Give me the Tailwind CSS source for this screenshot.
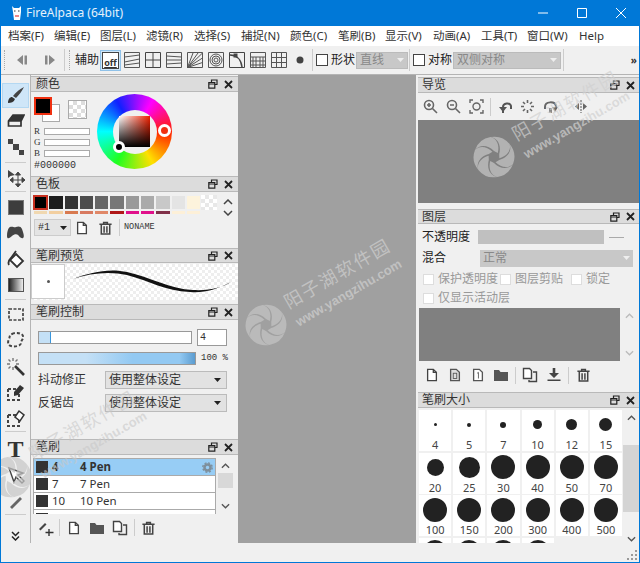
<!DOCTYPE html>
<html lang="en">
<head>
    <meta charset="UTF-8">
    <meta name="viewport" content="width=device-width, initial-scale=1.0">
    <title>FireAlpaca (64bit)</title>
    <script src="https://cdn.jsdelivr.net/npm/@tailwindcss/browser@4"></script>
</head>
<body class="font-['Noto_Sans','Noto_Sans_CJK_SC',sans-serif] text-[12px] text-[#333] bg-[#f0f0f0]">
<!-- shared icons -->
<svg class="hidden">
    <symbol id="i-new" viewBox="0 0 16 16"><path d="M3 1.500h6.500l3.500 3.500v9.500H3z M9.500 1.500V5H13" fill="#fff" stroke="#444" stroke-width="1.500"/></symbol>
    <symbol id="i-trash" viewBox="0 0 16 16"><path d="M1.500 4h13 M6 4V2h4v2 M3.500 4v10.500h9V4 M6.500 6v7 M9.500 6v7" fill="none" stroke="#444" stroke-width="1.600"/></symbol>
    <symbol id="i-folder" viewBox="0 0 16 16"><path d="M1 3h5l1.500 2H15v9H1z" fill="#555"/></symbol>
    <symbol id="i-copy" viewBox="0 0 16 16"><path d="M1.500 1.500h6l2 2v8h-8z" fill="#fff" stroke="#444" stroke-width="1.400"/><path d="M11 5h3.500v9.500H7V13" fill="none" stroke="#444" stroke-width="1.400"/></symbol>
    <symbol id="i-up" viewBox="0 0 10 6"><path d="M1 5l4-4 4 4" fill="none" stroke="currentColor" stroke-width="1.500"/></symbol>
    <symbol id="i-down" viewBox="0 0 10 6"><path d="M1 1l4 4 4-4" fill="none" stroke="currentColor" stroke-width="1.500"/></symbol>
    <symbol id="i-swirl" viewBox="-22 -22 44 44">
        <path id="petal" d="M0-6C-6-12-14-13-19-7A20 20 0 0 1-3.400-20C3-18.500 5.800-11.500 3.800-4Z"/>
        <use href="#petal" transform="rotate(60)"/><use href="#petal" transform="rotate(120)"/><use href="#petal" transform="rotate(180)"/><use href="#petal" transform="rotate(240)"/><use href="#petal" transform="rotate(300)"/>
    </symbol>
</svg>

<div class="relative w-[640px] h-[563px] overflow-hidden flex flex-col border-x border-b border-[#0078d7]">
    <!-- Title bar -->
    <div class="h-[26px] -mx-px bg-[#0078d7] text-white flex items-center shrink-0">
        <svg class="w-4 h-4 ml-[9px]" viewBox="0 0 16 16"><path d="M3 1l2 2h5l2-2v6l-1 8H5L4 7z" fill="#fff"/><path d="M5 6h1.500M9 6h1.500" stroke="#333"/><path d="M6 10h4v2H6z" fill="#e88"/></svg>
        <span class="ml-px text-[12px] text-white/90">FireAlpaca (64bit)</span>
        <div class="ml-auto flex items-center text-white">
            <svg class="w-[39px] h-[26px]" viewBox="0 0 39 26"><path d="M15 13h10" stroke="#fff"/></svg>
            <svg class="w-[39px] h-[26px]" viewBox="0 0 39 26"><path d="M15.500 8.500h9v9h-9z" fill="none" stroke="#fff"/></svg>
            <svg class="w-[39px] h-[26px]" viewBox="0 0 39 26"><path d="M15 8l10 10M25 8L15 18" stroke="#fff"/></svg>
        </div>
    </div>

    <!-- Menu -->
    <div class="h-[20px] -mx-px bg-white flex items-center pl-[8px] text-[11.500px] shrink-0">
        <span class="w-[46px]">档案(F)</span><span class="w-[46px]">编辑(E)</span><span class="w-[46px]">图层(L)</span><span class="w-[48px]">滤镜(R)</span><span class="w-[47px]">选择(S)</span><span class="w-[49px]">捕捉(N)</span><span class="w-[48px]">颜色(C)</span><span class="w-[47px]">笔刷(B)</span><span class="w-[48px]">显示(V)</span><span class="w-[48px]">动画(A)</span><span class="w-[46px]">工具(T)</span><span class="w-[52px]">窗口(W)</span><span>Help</span>
    </div>

    <!-- Toolbar -->
    <div class="h-[29px] flex items-center bg-[#f0f0f0] border-b border-[#b4b4b4] shrink-0 relative">
        <div class="w-[3px] h-[20px] ml-[3px] border-l border-dotted border-[#aaa]"></div>
        <svg class="w-[12px] h-[12px] ml-[9px]" viewBox="0 0 12 12"><path d="M7 1v10L1 6z M8.500 1.500h2.500v9H8.500z" fill="#888"/></svg>
        <svg class="w-[12px] h-[12px] ml-[16px]" viewBox="0 0 12 12"><path d="M1 1.500h2.500v9H1z M5 1v10l6-5z" fill="#888"/></svg>
        <div class="w-px h-[22px] bg-[#ccc] ml-[8px]"></div>
        <div class="w-[3px] h-[20px] ml-[4px] border-l border-dotted border-[#aaa]"></div>
        <span class="ml-[3px] w-[25px] text-[#222]">辅助</span>
        <div class="w-[21px] h-[21px] bg-[#cfe6f8] border border-[#8fc1e8] flex items-center justify-center">
            <div class="w-[17px] h-[17px] bg-white border border-[#444] flex items-end justify-center text-[9px] leading-[10px] font-bold underline">off</div>
        </div>
        <div class="flex items-center gap-[5px] ml-[3px]">
            <svg class="w-[16px] h-[16px]" viewBox="0 0 16 16" fill="none" stroke="#555"><path d="M.5.500h15v15H.5z M.5 5l15-2 M.5 10l15-3 M.5 13l15-2"/></svg>
            <svg class="w-[16px] h-[16px]" viewBox="0 0 16 16" fill="none" stroke="#444"><path d="M.5.500h15v15H.5z M8 .5v15 M.5 8h15"/></svg>
            <svg class="w-[16px] h-[16px]" viewBox="0 0 16 16" fill="none" stroke="#555"><path d="M.5.500h15v15H.5z M.5 4l15 1 M.5 8h15 M.5 12l15-1"/></svg>
            <svg class="w-[16px] h-[16px]" viewBox="0 0 16 16" fill="none" stroke="#555"><path d="M.5.500h15v15H.5z M.5 15.500L15.500 1 M.5 15.500L15.500 6 M.5 15.500l15-5 M.5 15.500L6 1 M.5 15.500L11 1"/></svg>
            <svg class="w-[16px] h-[16px]" viewBox="0 0 16 16" fill="none" stroke="#555"><path d="M.5.500h15v15H.5z"/><circle cx="8" cy="8" r="6"/><circle cx="8" cy="8" r="4"/><circle cx="8" cy="8" r="2"/></svg>
            <svg class="w-[16px] h-[16px]" viewBox="0 0 16 16" fill="none" stroke="#444"><path d="M.5.500h15v15H.5z"/><path d="M1 3c6 0 11 4 12 12" stroke-width="1.500"/><rect x="5" y="2" width="3" height="3" fill="#444"/></svg>
            <svg class="w-[16px] h-[16px]" viewBox="0 0 16 16" fill="none" stroke="#555"><path d="M.5.500h15v15H.5z M.5 5h15 M.5 9h15 M.5 13h15 M3 5v10 M6 5v10 M10 5v10 M13 5v10"/></svg>
            <svg class="w-[16px] h-[16px]" viewBox="0 0 16 16" fill="none" stroke="#555"><path d="M.5.500h15v15H.5z M.5 5.500h15 M.5 10.500h15 M5.500.5v15 M10.500.5v15"/></svg>
            <svg class="w-[16px] h-[16px]" viewBox="0 0 16 16"><circle cx="8" cy="8" r="3.500" fill="#444"/></svg>
        </div>
        <div class="w-px h-[22px] bg-[#ccc] ml-[4px]"></div>
        <div class="w-[12px] h-[12px] border border-[#444] bg-white ml-[3px]"></div>
        <span class="ml-[3px] w-[25px] text-[#222]">形状</span>
        <div class="w-[52px] h-[17px] bg-[#c8c8c8] border border-[#bbb] flex items-center justify-between px-[3px] text-[#888]">直线<svg class="w-[7px] h-[4px]" viewBox="0 0 7 4"><path d="M0 0h7L3.500 4z" fill="#eee"/></svg></div>
        <div class="w-px h-[22px] bg-[#ccc] ml-[1px]"></div>
        <div class="w-[12px] h-[12px] border border-[#444] bg-white ml-[3px]"></div>
        <span class="ml-[3px] w-[25px] text-[#222]">对称</span>
        <div class="w-[108px] h-[17px] bg-[#c8c8c8] border border-[#bbb] flex items-center justify-between px-[3px] text-[#888]">双侧对称<svg class="w-[7px] h-[4px]" viewBox="0 0 7 4"><path d="M0 0h7L3.500 4z" fill="#eee"/></svg></div>
        <div class="w-px h-[22px] bg-[#ccc] ml-[2px]"></div>
        <span class="ml-auto mr-[2px] text-[10px] font-bold leading-none">»</span>
    </div>

    <!-- Workspace -->
    <div class="flex h-[468px] shrink-0">
        <!-- Tools -->
        <div class="w-[30px] shrink-0 flex flex-col items-center border-r border-[#b4b4b4]">
            <div class="h-[8px] w-full"></div>
            <button class="w-[27px] h-[25px] bg-[#cfe6f8] border border-[#b4d8f2] flex items-center justify-center">
                <svg class="w-[20px] h-[20px]" viewBox="0 0 20 20"><path d="M18 1C14 3 10 6 7 10l3 2c3-3 6-7 8-11z" fill="#444"/><path d="M6 11c-2 0-4 2-4 6 3 0 6-1 7-4z" fill="#333"/></svg>
            </button>
            <div class="h-[26px] flex items-center"><svg class="w-[18px] h-[18px]" viewBox="0 0 18 18"><path d="M1.500 9L6 3h11l-3 6v5H1.500z M1.500 9H14" fill="none" stroke="#333" stroke-width="1.700"/><path d="M6 3h11l-3 6H1.500z" fill="#333"/></svg></div>
            <div class="h-[26px] flex items-center"><svg class="w-[18px] h-[18px]" viewBox="0 0 18 18" fill="#444"><rect x="1" y="1" width="5" height="5"/><rect x="6" y="6" width="6" height="6"/><rect x="12" y="12" width="5" height="5"/></svg></div>
            <div class="w-[21px] h-px bg-[#ccc] mt-[2px]"></div>
            <div class="h-[26px] mt-[2px] flex items-center"><svg class="w-[18px] h-[18px]" viewBox="0 0 18 18"><path d="M1 1v8l2.500-2L8 6z" fill="#444"/><path d="M11 5v12M5 11h12M11 3l-2.500 3h5zM11 18l-2.500-3h5zM3 11l3-2.500v5zM18 11l-3-2.500v5z" stroke="#444" fill="#444"/></svg></div>
            <div class="w-[21px] h-px bg-[#ccc]"></div>
            <div class="h-[26px] mt-[2px] flex items-center"><div class="w-[16px] h-[15px] bg-[#3d3d3d] border border-[#777]"></div></div>
            <div class="h-[26px] flex items-center"><svg class="w-[19px] h-[16px]" viewBox="0 0 19 16"><path d="M4 2c3-1 4 1 6 0s5-1 6 2 3 8 1 9-4-2-5-3-4-1-6 1-5 4-5 0 1-8 3-9z" fill="#444"/></svg></div>
            <div class="h-[26px] flex items-center"><svg class="w-[19px] h-[19px]" viewBox="0 0 19 19"><path d="M10 4l7 7-6 6-7-7z" fill="#fff" stroke="#333" stroke-width="1.800"/><path d="M10 1L5 8c-2 2-3 5-2 7" fill="none" stroke="#333" stroke-width="1.800"/></svg></div>
            <div class="h-[26px] flex items-center"><div class="w-[16px] h-[14px] border border-[#555] bg-[linear-gradient(to_right,#222,#eee)]"></div></div>
            <div class="w-[21px] h-px bg-[#ccc] mt-[1px]"></div>
            <div class="h-[26px] mt-[1px] flex items-center"><svg class="w-[16px] h-[13px]" viewBox="0 0 16 13"><path d="M1 1h14v11H1z" fill="none" stroke="#444" stroke-width="1.700" stroke-dasharray="3 1.500"/></svg></div>
            <div class="h-[26px] flex items-center"><svg class="w-[17px] h-[16px]" viewBox="0 0 17 16"><path d="M5 2c4-2 10-1 11 2s-2 4-2 7-6 4-10 3-3-5-2-7 0-4 3-5z" fill="none" stroke="#444" stroke-width="2" stroke-dasharray="3 2"/></svg></div>
            <div class="h-[26px] flex items-center"><svg class="w-[19px] h-[19px]" viewBox="0 0 19 19"><path d="M9 9l9 9" stroke="#333" stroke-width="2.600"/><path d="M7 1v3M7 10v3M1 7h3M10 7h3M2.500 2.500l2 2M11.500 2.500l-2 2M2.500 11.500l2-2" stroke="#777" stroke-width="1.400"/></svg></div>
            <div class="h-[26px] flex items-center"><svg class="w-[19px] h-[19px]" viewBox="0 0 19 19"><path d="M2 6h9M2 6v11h11v-7" fill="none" stroke="#444" stroke-width="2" stroke-dasharray="3 2"/><path d="M8 9l6-7 4 3-6 7-4 1z" fill="#333"/></svg></div>
            <div class="h-[26px] flex items-center"><svg class="w-[19px] h-[19px]" viewBox="0 0 19 19"><path d="M2 6h9M2 6v11h11v-7" fill="none" stroke="#444" stroke-width="2" stroke-dasharray="3 2"/><path d="M9 8l4-6 5 4-4 6z" fill="#fff" stroke="#333" stroke-width="1.500"/></svg></div>
            <div class="w-[21px] h-px bg-[#ccc]"></div>
            <div class="h-[26px] mt-[4px] flex items-center text-[24px] leading-none font-bold font-['Liberation_Serif',serif] text-[#333]">T</div>
            <div class="h-[26px] flex items-center"><svg class="w-[18px] h-[18px]" viewBox="0 0 18 18"><path d="M2 2l5 14 2-5 6 6 2-2-6-6 5-2z" fill="#fff" stroke="#444" stroke-width="1.400"/></svg></div>
            <div class="h-[26px] flex items-center"><svg class="w-[18px] h-[18px]" viewBox="0 0 18 18"><path d="M3 15L13 5l2 2L5 17z" fill="#666"/></svg></div>
            <div class="w-[21px] h-px bg-[#ccc]"></div>
            <svg class="w-[9px] h-[10px] mt-[16px]" viewBox="0 0 9 10" fill="none" stroke="#222" stroke-width="1.500"><path d="M1 1l3.500 3.500L8 1M1 5.500L4.500 9 8 5.500"/></svg>
        </div>

        <!-- Left docks -->
        <div class="w-[207px] shrink-0 flex flex-col">
            <!-- Color -->
            <div class="h-[16px] mt-[1px] flex items-center justify-between bg-[#dcdcdc] border-y border-[#b9b9b9] px-[5px] shrink-0"><span>颜色</span><span data-panel-icons></span></div>
            <div class="h-[84px] relative shrink-0">
                <div class="absolute left-[3px] top-[5px] w-[18px] h-[18px] bg-black border-2 border-[#f03010] z-10"></div>
                <div class="absolute left-[11px] top-[12px] w-[18px] h-[18px] bg-white border border-[#aaa]"></div>
                <div class="absolute left-[37px] top-[8px] w-[19px] h-[19px] border border-[#aaa] bg-[repeating-conic-gradient(#ddd_0_25%,#fff_0_50%)] bg-size-[8px_8px]"></div>
                <div class="absolute left-[3px] top-[36px] flex flex-col gap-[4px] text-[9px] leading-[7px] font-['Liberation_Serif',serif]">
                    <div class="flex items-center h-[7px]"><span class="w-[10px]">R</span><div class="w-[46px] h-[7px] bg-white border border-[#aaa]"></div></div>
                    <div class="flex items-center h-[7px]"><span class="w-[10px]">G</span><div class="w-[46px] h-[7px] bg-white border border-[#aaa]"></div></div>
                    <div class="flex items-center h-[7px]"><span class="w-[10px]">B</span><div class="w-[46px] h-[7px] bg-white border border-[#aaa]"></div></div>
                </div>
                <div class="absolute left-[3px] top-[68px] text-[10px] leading-[11px] font-['Liberation_Mono',monospace]">#000000</div>
                <!-- wheel -->
                <div class="absolute left-[66px] top-[2px] w-[75px] h-[75px] rounded-full bg-[conic-gradient(from_90deg,#ff2000,#ffe000,#20ff20,#00ffff,#1020ff,#ff00ff,#ff2000)] flex items-center justify-center">
                    <div class="w-[44px] h-[44px] rounded-full bg-[#f0f0f0] flex items-center justify-center">
                        <div class="w-[31px] h-[31px] bg-[linear-gradient(to_bottom,transparent,#000),linear-gradient(to_right,#fff,#f02000)]"></div>
                    </div>
                    <div class="absolute right-[1px] top-[30px] w-[13px] h-[13px] rounded-full border-[3px] border-white bg-[#f03010]"></div>
                    <div class="absolute left-[16px] bottom-[16px] w-[12px] h-[12px] rounded-full border-[3px] border-white bg-black"></div>
                </div>
            </div>

            <!-- Palette -->
            <div class="h-[16px] flex items-center justify-between bg-[#dcdcdc] border-y border-[#b9b9b9] px-[5px] shrink-0"><span>色板</span><span data-panel-icons></span></div>
            <div class="h-[55px] shrink-0 pl-[2px] pt-[3px]">
                <div class="flex items-start">
                    <div>
                        <div id="swatches" class="flex"></div>
                        <div id="strips" class="flex mt-[1px]"></div>
                    </div>
                    <div class="ml-[6px] flex flex-col gap-[5px] mt-[4px] text-[#444]">
                        <svg class="w-[10px] h-[6px]"><use href="#i-up"/></svg>
                        <svg class="w-[10px] h-[6px]"><use href="#i-down"/></svg>
                    </div>
                </div>
                <div class="flex items-center mt-[3px] ml-[1px]">
                    <div class="w-[37px] h-[17px] bg-[#e4e4e4] border border-[#ccc] flex items-center justify-between px-[3px] font-['Liberation_Mono',monospace] text-[10px]">#1<svg class="w-[7px] h-[4px]" viewBox="0 0 7 4"><path d="M0 0h7L3.500 4z" fill="#222"/></svg></div>
                    <svg class="w-[14px] h-[16px] ml-[4px]"><use href="#i-new"/></svg>
                    <svg class="w-[15px] h-[16px] ml-[9px]"><use href="#i-trash"/></svg>
                    <div class="w-px h-[17px] bg-[#ccc] ml-[6px]"></div>
                    <span class="ml-[4px] font-['Liberation_Mono',monospace] text-[8.500px]">NONAME</span>
                </div>
            </div>

            <!-- Preview -->
            <div class="h-[15px] mt-[1px] flex items-center justify-between bg-[#dcdcdc] border-y border-[#b9b9b9] px-[5px] shrink-0"><span>笔刷预览</span><span data-panel-icons></span></div>
            <div class="h-[36px] mt-[1px] flex shrink-0 bg-[repeating-conic-gradient(#eeeeee_0_25%,#fff_0_50%)] bg-size-[6px_6px]">
                <div class="w-[34px] h-[35px] bg-white border border-[#ccc] flex items-center justify-center"><div class="w-[3px] h-[3px] rounded-full bg-[#555]"></div></div>
                <svg class="w-[173px] h-[36px]" viewBox="0 0 173 36"><path d="M8 15C25 8 45 4 62 8C85 13 105 25 128 26C145 27 158 23 166 18C150 26 140 29 125 28C100 27 85 17 62 11C45 7 25 9 8 15Z" fill="#111"/></svg>
            </div>

            <!-- Brush control -->
            <div class="h-[16px] mt-[4px] flex items-center justify-between bg-[#dcdcdc] border-y border-[#b9b9b9] px-[5px] shrink-0"><span>笔刷控制</span><span data-panel-icons></span></div>
            <div class="h-[119px] shrink-0 pl-[7px] pr-[10px] pt-[9px] flex flex-col">
                <div class="flex items-center gap-[5px]">
                    <div class="w-[154px] h-[13px] bg-white border border-[#999]"><div class="w-[12px] h-full bg-[#c4e0f6] border-r border-[#3a96dc]"></div></div>
                    <div class="w-[30px] h-[17px] bg-white border border-[#999] px-[2px] text-[10px] leading-[15px] font-['Liberation_Mono',monospace]">4</div>
                </div>
                <div class="flex items-center mt-[6px]">
                    <div class="w-[158px] h-[13px] border border-[#999] bg-[linear-gradient(to_right,#c4e0f6,#c4e0f6_30%,#93c9f2_60%,#93c9f2_90%,#5b9cd0)]"></div>
                    <span class="ml-[5px] text-[9px] font-['Liberation_Mono',monospace] whitespace-nowrap">100 %</span>
                </div>
                <div class="flex items-center mt-[5px]">
                    <span class="w-[67px]">抖动修正</span>
                    <div class="w-[122px] h-[18px] bg-[#e2e2e2] border border-[#bbb] flex items-center justify-between px-[3px]">使用整体设定<svg class="w-[7px] h-[4px] mr-[2px]" viewBox="0 0 7 4"><path d="M0 0h7L3.500 4z" fill="#222"/></svg></div>
                </div>
                <div class="flex items-center mt-[5px]">
                    <span class="w-[67px]">反锯齿</span>
                    <div class="w-[122px] h-[18px] bg-[#e2e2e2] border border-[#bbb] flex items-center justify-between px-[3px]">使用整体设定<svg class="w-[7px] h-[4px] mr-[2px]" viewBox="0 0 7 4"><path d="M0 0h7L3.500 4z" fill="#222"/></svg></div>
                </div>
            </div>

            <!-- Brushes -->
            <div class="h-[16px] flex items-center justify-between bg-[#dcdcdc] border-y border-[#b9b9b9] px-[5px] shrink-0"><span>笔刷</span><span data-panel-icons></span></div>
            <div class="flex pl-[2px] pt-[3px] h-[59px] shrink-0">
                <div class="w-[183px] overflow-hidden border-x border-t border-[#aaa] text-[11.500px]">
                    <div class="h-[17px] bg-[#97cdf5] flex items-center font-bold border-b border-[#aaa]"><div class="w-[12px] h-[12px] bg-[#333] ml-[2px]"></div><span class="w-[32px] pl-[4px]">4</span><span>4 Pen</span><svg class="w-[11px] h-[11px] ml-auto mr-[2px]" viewBox="0 0 11 11" fill="none" stroke="#7e8f9c"><circle cx="5.500" cy="5.500" r="3" stroke-width="2.500"/><circle cx="5.500" cy="5.500" r="4.700" stroke-width="1.400" stroke-dasharray="2 1.700"/></svg></div>
                    <div class="h-[17px] bg-white flex items-center border-b border-[#aaa]"><div class="w-[12px] h-[12px] bg-[#333] ml-[2px]"></div><span class="w-[32px] pl-[4px]">7</span><span>7 Pen</span></div>
                    <div class="h-[17px] bg-white flex items-center border-b border-[#aaa]"><div class="w-[12px] h-[12px] bg-[#333] ml-[2px]"></div><span class="w-[32px] pl-[4px]">10</span><span>10 Pen</span></div>
                    <div class="h-[17px] bg-white flex items-center"><div class="w-[12px] h-[12px] bg-[#333] ml-[2px]"></div><span class="w-[32px] pl-[4px]">15</span><span>15 Pen</span></div>
                </div>
                <div class="w-[16px] ml-[1px] flex flex-col items-center text-[#555]">
                    <svg class="w-[9px] h-[6px] mt-[5px]"><use href="#i-up"/></svg>
                    <div class="w-[15px] h-[15px] bg-[#d8d8d8] mt-[4px]"></div>
                    <svg class="w-[9px] h-[6px] mt-auto mb-[5px]"><use href="#i-down"/></svg>
                </div>
            </div>
            <div class="flex items-center pl-[7px] h-[27px] shrink-0">
                <svg class="w-[17px] h-[16px]" viewBox="0 0 17 16"><path d="M1 9l6-6 1.500 1.500-6 6z" fill="#444"/><path d="M11 9v7M7.500 12.500h8" stroke="#333" stroke-width="1.400"/></svg>
                <div class="w-px h-[17px] bg-[#ccc] ml-[4px]"></div>
                <svg class="w-[14px] h-[16px] ml-[7px]"><use href="#i-new"/></svg>
                <svg class="w-[16px] h-[16px] ml-[8px]"><use href="#i-folder"/></svg>
                <svg class="w-[16px] h-[16px] ml-[7px]"><use href="#i-copy"/></svg>
                <div class="w-px h-[17px] bg-[#ccc] ml-[6px]"></div>
                <svg class="w-[15px] h-[16px] ml-[6px]"><use href="#i-trash"/></svg>
            </div>
        </div>

        <!-- Canvas -->
        <div class="w-[178px] shrink-0 bg-[#a0a0a0]"></div>

        <!-- Right docks -->
        <div class="flex-1 min-w-0 pl-[2px] flex flex-col">
            <div class="h-[16px] mt-[2px] flex items-center justify-between bg-[#dcdcdc] border-y border-[#b9b9b9] px-[4px] shrink-0"><span>导览</span><span data-panel-icons></span></div>
            <div class="h-[27px] flex items-center pl-[5px] shrink-0 text-[#666]">
                <svg class="w-[15px] h-[15px]" viewBox="0 0 15 15" fill="none" stroke="#666" stroke-width="1.600"><circle cx="6" cy="6" r="4.500"/><path d="M9.500 9.500l4.500 4.500M4 6h4M6 4v4"/></svg>
                <svg class="w-[15px] h-[15px] ml-[8px]" viewBox="0 0 15 15" fill="none" stroke="#666" stroke-width="1.600"><circle cx="6" cy="6" r="4.500"/><path d="M9.500 9.500l4.500 4.500M4 6h4"/></svg>
                <svg class="w-[15px] h-[15px] ml-[8px]" viewBox="0 0 15 15" fill="none" stroke="#666" stroke-width="1.400"><circle cx="7.500" cy="7.500" r="3.500"/><path d="M1 4V1h3M11 1h3v3M14 11v3h-3M4 14H1v-3"/></svg>
                <div class="w-px h-[18px] bg-[#ccc] ml-[6px]"></div>
                <svg class="w-[15px] h-[15px] ml-[7px]" viewBox="0 0 15 15" fill="none" stroke="#555" stroke-width="2"><path d="M5 14V8c0-4 7-5 8-1l0 3"/><path d="M1 8h8l-4 5z" fill="#555" stroke="none"/></svg>
                <svg class="w-[15px] h-[15px] ml-[7px]" viewBox="0 0 15 15" fill="none" stroke="#666" stroke-width="1.600"><path d="M7.500 1v3M7.500 11v3M1 7.500h3M11 7.500h3M3 3l2 2M10 10l2 2M12 3l-2 2M5 10l-2 2"/></svg>
                <svg class="w-[15px] h-[15px] ml-[8px]" viewBox="0 0 15 15" fill="none" stroke="#666" stroke-width="2"><path d="M2 10V8c0-6 10-6 11-1v3"/><path d="M9 8h6l-3 5z" fill="#666" stroke="none"/><path d="M6 9h3v5H6z" fill="#888" stroke="none"/></svg>
                <svg class="w-[15px] h-[15px] ml-[16px]" viewBox="0 0 15 15"><path d="M7 1v13" stroke="#555" stroke-dasharray="2 1"/><path d="M5 4v7L1 7.500z M9 4v7l4-3.500z" fill="#666"/></svg>
            </div>
            <div class="h-[83px] bg-[#808080] shrink-0"></div>

            <div class="h-[15px] mt-[6px] flex items-center justify-between bg-[#dcdcdc] border-y border-[#b9b9b9] px-[4px] shrink-0"><span>图层</span><span data-panel-icons></span></div>
            <div class="h-[168px] shrink-0 relative">
                <div class="flex items-center h-[14px] mt-[6px] ml-[4px]">
                    <span class="w-[56px] text-[#222]">不透明度</span>
                    <div class="w-[126px] h-[14px] bg-[#c0c0c0]"></div>
                    <div class="w-[15px] h-px bg-[#aaa] ml-[5px]"></div>
                </div>
                <div class="flex items-center h-[18px] mt-[5px] ml-[4px]">
                    <span class="w-[58px] text-[#222]">混合</span>
                    <div class="w-[153px] h-[17px] bg-[#c8c8c8] flex items-center justify-between px-[3px] text-[#888]">正常<svg class="w-[7px] h-[4px]" viewBox="0 0 7 4"><path d="M0 0h7L3.500 4z" fill="#eee"/></svg></div>
                </div>
                <div class="flex items-center h-[16px] mt-[4px] ml-[5px] text-[#999]">
                    <div class="w-[11px] h-[11px] bg-white border border-[#ddd]"></div><span class="ml-[4px] w-[62px]">保护透明度</span>
                    <div class="w-[11px] h-[11px] bg-white border border-[#ddd]"></div><span class="ml-[4px] w-[56px]">图层剪贴</span>
                    <div class="w-[11px] h-[11px] bg-white border border-[#ddd]"></div><span class="ml-[4px]">锁定</span>
                </div>
                <div class="flex items-center h-[16px] mt-[3px] ml-[5px] text-[#999]">
                    <div class="w-[11px] h-[11px] bg-white border border-[#ddd]"></div><span class="ml-[4px]">仅显示活动层</span>
                </div>
                <div class="flex mt-[2px] ml-[1px]">
                    <div class="w-[201px] h-[53px] bg-[#808080]"></div>
                    <div class="w-[16px] ml-[1px] flex flex-col items-center justify-between py-[5px] text-[#bbb]">
                        <svg class="w-[9px] h-[6px]"><use href="#i-up"/></svg>
                        <svg class="w-[9px] h-[6px]"><use href="#i-down"/></svg>
                    </div>
                </div>
                <div class="flex items-center h-[22px] mt-[3px] pl-[7px]">
                    <svg class="w-[14px] h-[16px]"><use href="#i-new"/></svg>
                    <svg class="w-[14px] h-[16px] ml-[9px]" viewBox="0 0 16 16"><path d="M3 1.500h6.500l3.500 3.500v9.500H3z" fill="#ddd" stroke="#555" stroke-width="1.500"/><rect x="6" y="6" width="4" height="6" fill="none" stroke="#555"/></svg>
                    <svg class="w-[14px] h-[16px] ml-[9px]" viewBox="0 0 16 16"><path d="M3 1.500h6.500l3.500 3.500v9.500H3z" fill="#fff" stroke="#555" stroke-width="1.500"/><path d="M7 6l1.500-1v7" fill="none" stroke="#555"/></svg>
                    <svg class="w-[16px] h-[16px] ml-[8px]"><use href="#i-folder"/></svg>
                    <div class="w-px h-[17px] bg-[#ccc] ml-[6px]"></div>
                    <svg class="w-[16px] h-[16px] ml-[6px]"><use href="#i-copy"/></svg>
                    <svg class="w-[16px] h-[16px] ml-[8px]" viewBox="0 0 16 16"><path d="M8 1v6" stroke="#444" stroke-width="2.600"/><path d="M3 6h10L8 11z M1.500 12.500h13v1.500h-13z" fill="#444"/></svg>
                    <div class="w-px h-[17px] bg-[#ccc] ml-[6px]"></div>
                    <svg class="w-[15px] h-[16px] ml-[7px]"><use href="#i-trash"/></svg>
                </div>
            </div>

            <div class="h-[16px] flex items-center justify-between bg-[#dcdcdc] border-y border-[#b9b9b9] px-[4px] shrink-0"><span>笔刷大小</span><span data-panel-icons></span></div>
            <div class="flex-1 min-h-0 flex overflow-hidden pt-[2px] pl-[1px]">
                <div id="tips" class="w-[204px] grid grid-cols-6 gap-x-[2px] gap-y-[1.500px] content-start"></div>
                <div class="w-[16px] ml-[1px] flex flex-col items-center text-[#555] relative">
                    <svg class="w-[9px] h-[6px] mt-[5px]"><use href="#i-up"/></svg>
                    <div class="w-[16px] h-[67px] bg-[#d4d4d4] mt-[24px]"></div>
                    <svg class="w-[9px] h-[6px] mt-[24px]"><use href="#i-down"/></svg>
                </div>
            </div>
        </div>
    </div>

    <!-- Status strip -->
    <div class="flex-1 flex items-end justify-end pr-[2px] pb-[2px]">
        <svg class="w-[10px] h-[10px]" viewBox="0 0 10 10" fill="#999"><rect x="8" y="0" width="2" height="2"/><rect x="4" y="4" width="2" height="2"/><rect x="8" y="4" width="2" height="2"/><rect x="0" y="8" width="2" height="2"/><rect x="4" y="8" width="2" height="2"/><rect x="8" y="8" width="2" height="2"/></svg>
    </div>

    <!-- Watermarks lie over the whole window -->
    <div class="absolute left-[243px] top-[303px] pointer-events-none text-[#c4c4c4]/70">
        <svg class="w-[44px] h-[44px]" fill="currentColor"><use href="#i-swirl"/></svg>
    </div>
    <div class="absolute left-[289px] top-[291px] rotate-[-30deg] origin-left pointer-events-none whitespace-nowrap text-[#d0d0d0]/70">
        <div class="text-[18px] leading-[22px] tracking-[2px]">阳子湖软件园</div>
        <div class="mt-[4px] text-[13px] leading-[15px] font-bold font-['Liberation_Sans',sans-serif]">www.yangzihu.com</div>
    </div>
    <div class="absolute left-[471px] top-[135px] pointer-events-none text-[#c8c8c8]/70">
        <svg class="w-[44px] h-[44px]" fill="currentColor"><use href="#i-swirl"/></svg>
    </div>
    <div class="absolute left-[517px] top-[123px] rotate-[-30deg] origin-left pointer-events-none whitespace-nowrap text-[#d0d0d0]/70">
        <div class="text-[18px] leading-[22px] tracking-[2px]">阳子湖软件园</div>
        <div class="mt-[4px] text-[13px] leading-[15px] font-bold font-['Liberation_Sans',sans-serif]">www.yangzihu.com</div>
    </div>
    <div class="absolute left-[-12px] top-[455px] pointer-events-none text-[#c4c4c4]/70">
        <svg class="w-[44px] h-[44px]" fill="currentColor"><use href="#i-swirl"/></svg>
    </div>
    <div class="absolute left-[34px] top-[443px] rotate-[-30deg] origin-left pointer-events-none whitespace-nowrap text-[#c8c8c8]/60">
        <div class="text-[18px] leading-[22px] tracking-[2px]">阳子湖软件园</div>
        <div class="mt-[4px] text-[13px] leading-[15px] font-bold font-['Liberation_Sans',sans-serif]">www.yangzihu.com</div>
    </div>
</div>

<script>
    // Panel header buttons
    document.querySelectorAll('[data-panel-icons]').forEach(el => {
        el.className = 'flex items-center gap-[6px]';
        el.innerHTML = `
            <svg class="w-[10px] h-[10px]" viewBox="0 0 10 10" fill="none" stroke="#222" stroke-width="1.200"><path d="M3.500 3V1h5.500v4.500H7"/><path d="M.8 3.500h6v5.700h-6z M.8 5h6" /></svg>
            <svg class="w-[9px] h-[9px]" viewBox="0 0 9 9" stroke="#222" stroke-width="1.800"><path d="M1 1l7 7M8 1L1 8"/></svg>`;
    });

    // Palette
    const swatchColors = ['#000','#1c1c1c','#333','#4d4d4d','#666','#777','#999','#aaa','#c8c8c8','#e4e4e4','#fdf3dc','checker'];
    const stripColors = ['#f0d8b0','#f2cfa0','#d87a50','#d87a60','#e08868','#b01818','#e0108a','#e0108a','#803048','#fdf0d8','#fdf0d8','#f0f0f0'];
    document.getElementById('swatches').innerHTML = swatchColors.map((c, i) => {
        if (c === 'checker') return `<div class="w-[15.300px] h-[15px] bg-[repeating-conic-gradient(#e8e8e8_0_25%,#fff_0_50%)] bg-size-[8px_8px]"></div>`;
        const border = i === 0 ? 'border-2 border-[#c83020]' : 'border border-[#f0f0f0]';
        return `<div class="w-[15.300px] h-[15px] ${border}" style="background:${c}"></div>`;
    }).join('');
    document.getElementById('strips').innerHTML = stripColors.map(c =>
        `<div class="w-[15.300px] h-[3px] border-x border-[#f0f0f0]" style="background:${c}"></div>`
    ).join('');

    // Brush size tiles
    const tips = [[4,3],[5,4],[7,6],[10,9],[12,11],[15,13],[20,17],[25,21],[30,24],[40,24],[50,24],[70,24],[100,24],[150,24],[200,24],[300,24],[400,24],[500,24],[600,24],[700,24],[800,24],[1000,24]];
    document.getElementById('tips').innerHTML = tips.map(([size, d]) => `
        <div class="h-[41px] bg-white flex flex-col items-center overflow-hidden">
            <div class="h-[29px] w-full flex items-center justify-center"><div class="rounded-full bg-[#222]" style="width:${d}px;height:${d}px"></div></div>
            <span class="text-[11px] leading-[12px] text-[#444]">${size}</span>
        </div>`).join('');
</script>
</body>
</html>
